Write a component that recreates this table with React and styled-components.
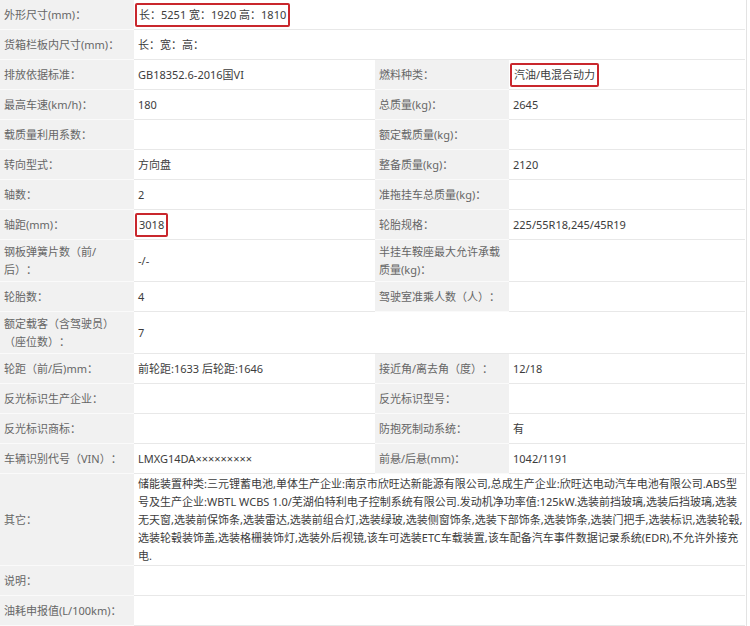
import React from 'react';
import styled, { createGlobalStyle } from 'styled-components';

const GlobalStyle = createGlobalStyle`
    html, body {
        margin: 0;
        padding: 0;
        background: #fff;
    }
    body {
        font-family: "Noto Sans", "Noto Sans CJK SC", sans-serif;
        text-spacing-trim: space-all;
    }
`;

const Sheet = styled.div`
    display: grid;
    grid-template-columns: 134px 241px 134px 236px;
    width: 746px;
    border-right: 1px solid #e3e3e3;
    font-size: 11px;
    font-family: "Noto Sans", "Noto Sans CJK SC", sans-serif;
`;

const Label = styled.div`
    box-sizing: border-box;
    height: ${p => p.$h}px;
    display: flex;
    align-items: center;
    padding: 0 3px 0 4px;
    background: #f1f1f1;
    color: #666;
    line-height: 18px;
    white-space: nowrap;
    border-bottom: 1px solid #fafafa;
`;

const Value = styled.div`
    box-sizing: border-box;
    height: ${p => p.$h}px;
    display: flex;
    align-items: center;
    padding: 0 4px;
    background: #fff;
    color: #3c3c3c;
    line-height: 18px;
    border-bottom: 1px solid #e8e8e8;
    grid-column: ${p => (p.$span ? 'span 3' : 'auto')};
`;

const Boxed = styled.span`
    display: inline-block;
    margin-left: -3px;
    padding: 0 2px;
    line-height: 20px;
    border: 2px solid #c9272d;
    border-radius: 2px;
`;

const Lines = styled.div`
    display: flex;
    flex-direction: column;
    span {
        white-space: nowrap;
        line-height: 18px;
    }
`;

const other = [
    '储能装置种类:三元锂蓄电池,单体生产企业:南京市欣旺达新能源有限公司,总成生产企业:欣旺达电动汽车电池有限公司.ABS型',
    '号及生产企业:WBTL WCBS 1.0/芜湖伯特利电子控制系统有限公司.发动机净功率值:125kW.选装前挡玻璃,选装后挡玻璃,选装',
    '无天窗,选装前保饰条,选装雷达,选装前组合灯,选装绿玻,选装侧窗饰条,选装下部饰条,选装饰条,选装门把手,选装标识,选装轮毂,',
    '选装轮毂装饰盖,选装格栅装饰灯,选装外后视镜,该车可选装ETC车载装置,该车配备汽车事件数据记录系统(EDR),不允许外接充',
    '电.',
];

// [label, value, label2, value2, height]; null label2 = value spans the row
const rows = [
    ['外形尺寸(mm)：', <Boxed>长：5251 宽：1920 高：1810</Boxed>, null, null, 30],
    ['货箱栏板内尺寸(mm)：', '长：宽：高：', null, null, 30],
    ['排放依据标准：', 'GB18352.6-2016国VI', '燃料种类：', <Boxed>汽油/电混合动力</Boxed>, 30],
    ['最高车速(km/h)：', '180', '总质量(kg)：', '2645', 30],
    ['载质量利用系数：', '', '额定载质量(kg)：', '', 30],
    ['转向型式：', '方向盘', '整备质量(kg)：', '2120', 30],
    ['轴数：', '2', '准拖挂车总质量(kg)：', '', 30],
    ['轴距(mm)：', <Boxed>3018</Boxed>, '轮胎规格：', '225/55R18,245/45R19', 30],
    [<>钢板弹簧片数（前/<br />后）：</>, '-/-', <>半挂车鞍座最大允许承载<br />质量(kg)：</>, '', 42],
    ['轮胎数：', '4', '驾驶室准乘人数（人）：', '', 30],
    [<>额定载客（含驾驶员）<br />（座位数）：</>, '7', null, null, 42],
    ['轮距（前/后)mm：', '前轮距:1633 后轮距:1646', '接近角/离去角（度）：', '12/18', 30],
    ['反光标识生产企业：', '', '反光标识型号：', '', 30],
    ['反光标识商标：', '', '防抱死制动系统：', '有', 30],
    ['车辆识别代号（VIN）：', 'LMXG14DA×××××××××', '前悬/后悬(mm)：', '1042/1191', 30],
    ['其它：', <Lines>{other.map((l, i) => <span key={i}>{l}</span>)}</Lines>, null, null, 92],
    ['说明：', '', null, null, 30],
    ['油耗申报值(L/100km)：', '', null, null, 30],
];

export default function App() {
    return (
        <>
            <GlobalStyle />
            <Sheet>
                {rows.map(([l1, v1, l2, v2, h], i) => (
                    <React.Fragment key={i}>
                        <Label $h={h}>{l1}</Label>
                        <Value $h={h} $span={l2 === null}>{v1}</Value>
                        {l2 !== null && <Label $h={h}>{l2}</Label>}
                        {l2 !== null && <Value $h={h}>{v2}</Value>}
                    </React.Fragment>
                ))}
            </Sheet>
        </>
    );
}
